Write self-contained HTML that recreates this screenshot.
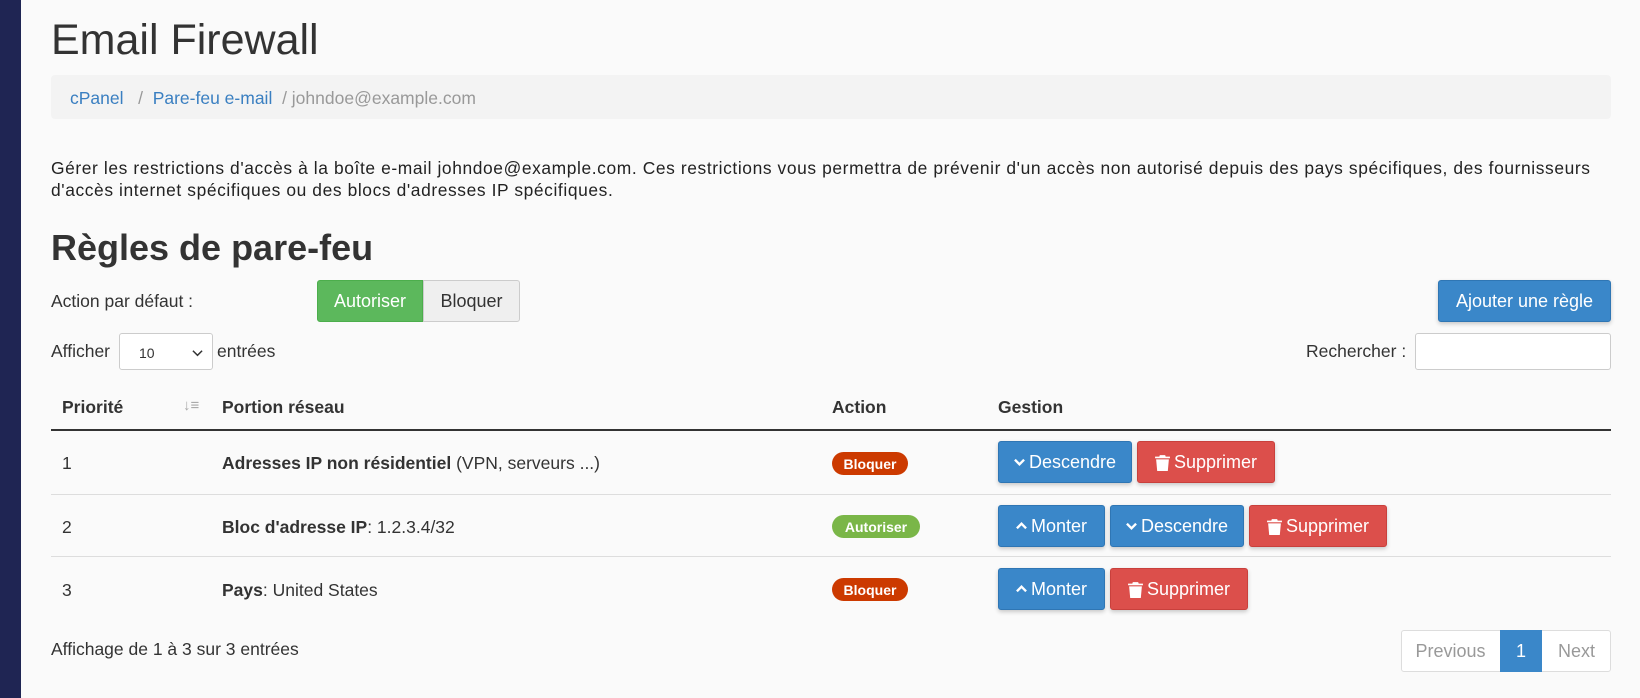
<!DOCTYPE html>
<html><head><meta charset="utf-8"><style>
*{box-sizing:border-box;margin:0;padding:0}
body{width:1640px;height:698px;background:#fafafa;font-family:"Liberation Sans",sans-serif;color:#333;position:relative;overflow:hidden;font-size:17px}
.a{position:absolute;white-space:nowrap}
.side{left:0;top:0;width:21px;height:698px;background:#1f2553}
.btn{position:absolute;border-radius:3px;color:#fff;font-size:18px;display:flex;align-items:center;justify-content:center;box-shadow:0 2px 4px rgba(0,0,0,.2);gap:4px}
.bl{background:#3a87c9;border:1px solid #2f76b4}
.rd{background:#dc4f4b;border:1px solid #c9403c}
.badge{position:absolute;height:23px;border-radius:12px;color:#fff;font-weight:bold;font-size:14px;display:flex;align-items:center;justify-content:center}
.th{font-weight:bold;font-size:17.5px;top:397px}
.line{position:absolute;left:51px;width:1560px;height:1px;background:#ddd}
.t{font-size:17.5px}
</style></head><body>
<svg width="0" height="0" style="position:absolute"><defs>
<symbol id="tr" viewBox="0 0 14 16"><path d="M4.5 1h5l.5 1.5H14V4H0V2.5h4z M1 5h12l-1 11H2z" fill="#fff"/></symbol>
<symbol id="dn" viewBox="0 0 12 8"><path d="M1 1.5l5 5 5-5" stroke="#fff" stroke-width="2.6" fill="none"/></symbol>
<symbol id="up" viewBox="0 0 12 8"><path d="M1 6.5l5-5 5 5" stroke="#fff" stroke-width="2.6" fill="none"/></symbol>
</defs></svg>
<div class="a side"></div>
<div class="a" style="left:51px;top:16px;font-size:43px;color:#333;font-weight:300">Email Firewall</div>
<div class="a" style="left:51px;top:75px;width:1560px;height:44px;background:#f3f3f3;border-radius:4px"></div>
<div class="a" style="left:70px;top:88px;font-size:17.5px;color:#999"><span style="color:#3a7fc1">cPanel</span>&nbsp;&nbsp; / &nbsp;<span style="color:#3a7fc1">Pare-feu e-mail</span>&nbsp;&nbsp;/ johndoe@example.com</div>
<div class="a" style="left:51px;top:157px;font-size:17.4px;letter-spacing:0.6px;line-height:22px;color:#222">Gérer les restrictions d'accès à la boîte e-mail johndoe@example.com. Ces restrictions vous permettra de prévenir d'un accès non autorisé depuis des pays spécifiques, des fournisseurs<br>d'accès internet spécifiques ou des blocs d'adresses IP spécifiques.</div>
<div class="a" style="left:51px;top:227px;font-size:36px;font-weight:bold;color:#333">Règles de pare-feu</div>
<div class="a t" style="left:51px;top:291px">Action par défaut :</div>
<div class="a" style="left:317px;top:280px;width:106px;height:42px;background:#5cb85c;border:1px solid #4cae4c;border-radius:3px 0 0 3px;color:#fff;font-size:18px;display:flex;align-items:center;justify-content:center">Autoriser</div>
<div class="a" style="left:423px;top:280px;width:97px;height:42px;background:#efefef;border:1px solid #ccc;border-radius:0 3px 3px 0;color:#333;font-size:18px;display:flex;align-items:center;justify-content:center">Bloquer</div>
<div class="btn bl" style="left:1438px;top:280px;width:173px;height:42px">Ajouter une règle</div>
<div class="a t" style="left:51px;top:341px">Afficher</div>
<div class="a" style="left:119px;top:333px;width:94px;height:37px;background:#fff;border:1px solid #ccc;border-radius:3px;font-size:14px;padding:11px 0 0 19px">10<svg style="position:absolute;right:9px;top:15px" width="11" height="8" viewBox="0 0 12 8"><path d="M1 1.5l5 5 5-5" stroke="#333" stroke-width="1.6" fill="none"/></svg></div>
<div class="a t" style="left:217px;top:341px">entrées</div>
<div class="a t" style="left:1306px;top:341px">Rechercher :</div>
<div class="a" style="left:1415px;top:333px;width:196px;height:37px;background:#fff;border:1px solid #ccc;border-radius:3px"></div>
<div class="a th" style="left:62px">Priorité</div>
<div class="a" style="left:183px;top:397px;color:#aaa;font-size:15px;font-weight:bold">↓≡</div>
<div class="a th" style="left:222px">Portion réseau</div>
<div class="a th" style="left:832px">Action</div>
<div class="a th" style="left:998px">Gestion</div>
<div class="a" style="left:51px;top:429px;width:1560px;height:2px;background:#333"></div>
<div class="line" style="top:494px"></div>
<div class="line" style="top:556px"></div>
<div class="a t" style="left:62px;top:453px">1</div>
<div class="a t" style="left:222px;top:453px"><b>Adresses IP non résidentiel</b> (VPN, serveurs ...)</div>
<div class="badge" style="left:832px;top:452px;width:76px;background:#cc3a00">Bloquer</div>
<div class="btn bl" style="left:998px;top:441px;width:134px;height:42px"><svg width="11" height="8"><use href="#dn"/></svg>Descendre</div>
<div class="btn rd" style="left:1137px;top:441px;width:138px;height:42px"><svg width="15" height="17"><use href="#tr"/></svg>Supprimer</div>
<div class="a t" style="left:62px;top:517px">2</div>
<div class="a t" style="left:222px;top:517px"><b>Bloc d'adresse IP</b>: 1.2.3.4/32</div>
<div class="badge" style="left:832px;top:515px;width:88px;background:#7ab648">Autoriser</div>
<div class="btn bl" style="left:998px;top:505px;width:107px;height:42px"><svg width="11" height="8"><use href="#up"/></svg>Monter</div>
<div class="btn bl" style="left:1110px;top:505px;width:134px;height:42px"><svg width="11" height="8"><use href="#dn"/></svg>Descendre</div>
<div class="btn rd" style="left:1249px;top:505px;width:138px;height:42px"><svg width="15" height="17"><use href="#tr"/></svg>Supprimer</div>
<div class="a t" style="left:62px;top:580px">3</div>
<div class="a t" style="left:222px;top:580px"><b>Pays</b>: United States</div>
<div class="badge" style="left:832px;top:578px;width:76px;background:#cc3a00">Bloquer</div>
<div class="btn bl" style="left:998px;top:568px;width:107px;height:42px"><svg width="11" height="8"><use href="#up"/></svg>Monter</div>
<div class="btn rd" style="left:1110px;top:568px;width:138px;height:42px"><svg width="15" height="17"><use href="#tr"/></svg>Supprimer</div>
<div class="a t" style="left:51px;top:639px">Affichage de 1 à 3 sur 3 entrées</div>
<div class="a" style="left:1401px;top:630px;width:210px;height:42px;border:1px solid #ddd;border-radius:3px;background:#fff"></div>
<div class="a" style="left:1401px;top:630px;width:99px;height:42px;color:#999;font-size:18px;display:flex;align-items:center;justify-content:center">Previous</div>
<div class="a" style="left:1500px;top:630px;width:42px;height:42px;background:#3a87c9;color:#fff;font-size:18px;display:flex;align-items:center;justify-content:center">1</div>
<div class="a" style="left:1542px;top:630px;width:69px;height:42px;color:#999;font-size:18px;display:flex;align-items:center;justify-content:center">Next</div>
</body></html>
